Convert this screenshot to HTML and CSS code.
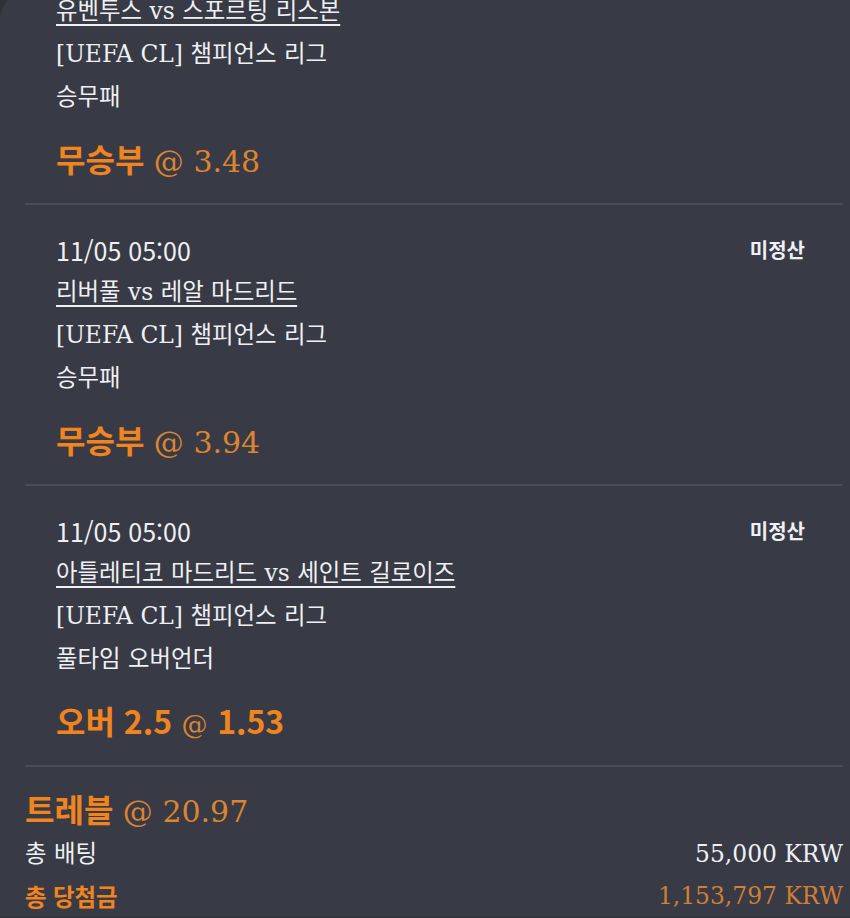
FILE: index.html
```html
<!DOCTYPE html>
<html lang="ko">

<head>
    <meta charset="UTF-8">
    <meta name="viewport" content="width=device-width, initial-scale=1.0">
    <title>배팅 내역</title>
    <link rel="stylesheet" href="styles.css">
</head>

<body>
    <div class="sheet-edge"></div>
    <div class="sheet">
        <div class="bet bet-cut">
            <a class="match" href="#">유벤투스 vs 스포르팅 리스본</a>
            <div class="line">[UEFA CL] 챔피언스 리그</div>
            <div class="line">승무패</div>
            <div class="pick"><b>무승부</b> @ 3.48</div>
        </div>

        <div class="bet">
            <div class="head">
                <span class="date">11/05 05:00</span>
                <span class="status">미정산</span>
            </div>
            <a class="match" href="#">리버풀 vs 레알 마드리드</a>
            <div class="line">[UEFA CL] 챔피언스 리그</div>
            <div class="line">승무패</div>
            <div class="pick"><b>무승부</b> @ 3.94</div>
        </div>

        <div class="bet">
            <div class="head">
                <span class="date">11/05 05:00</span>
                <span class="status">미정산</span>
            </div>
            <a class="match" href="#">아틀레티코 마드리드 vs 세인트 길로이즈</a>
            <div class="line">[UEFA CL] 챔피언스 리그</div>
            <div class="line">풀타임 오버언더</div>
            <div class="pick"><b>오버 2.5</b> <span class="at">@</span> <b>1.53</b></div>
        </div>

        <div class="summary">
            <div class="pick"><b>트레블</b> @ 20.97</div>
            <div class="row">
                <span>총 배팅</span>
                <span>55,000 KRW</span>
            </div>
            <div class="row row-win">
                <b>총 당첨금</b>
                <span>1,153,797 KRW</span>
            </div>
        </div>
    </div>
</body>

</html>
```

FILE: styles.css
```css
body {
    margin: 0;
    background: #2f3038;
    color: #eef0f3;
    font-family: "DejaVu Serif", "Noto Sans CJK KR", serif;
    font-size: 23.4px;
    overflow: hidden;
}

.sheet-edge {
    height: 3px;
    margin-left: 30px;
    background: #5c5e68;
}

.sheet {
    background: #383a45;
    border-top-left-radius: 30px;
    padding: 0 7px 0 25px;
    min-height: 915px;
}

.bet {
    padding: 23px 38px 20px 31px;
    border-bottom: 2px solid #4a4c58;
}

.bet-cut {
    padding-top: 0;
    margin-top: -13px;
}

.head {
    display: flex;
    justify-content: space-between;
    align-items: center;
    height: 43px;
}

.date {
    font-family: "Noto Sans CJK KR", sans-serif;
    font-size: 25px;
    font-weight: 400;
}

.status {
    font-family: "Noto Sans CJK KR", sans-serif;
    font-size: 20px;
    font-weight: 700;
}

.match {
    display: block;
    width: fit-content;
    height: 43px;
    line-height: 43px;
    color: #eef0f3;
    text-decoration: underline;
    text-decoration-thickness: 2px;
    text-underline-offset: 5px;
}

.line {
    height: 43px;
    line-height: 43px;
}

.pick {
    margin-top: 14px;
    height: 50px;
    line-height: 50px;
    font-size: 30px;
    color: #dc8530;
}

.pick b {
    font-family: "Noto Sans CJK KR", sans-serif;
    font-size: 32px;
    font-weight: 700;
    color: #f0841f;
}

.pick .at {
    font-size: 26px;
}

.summary {
    padding-top: 16px;
}

.summary .pick {
    margin-top: 0;
}

.row {
    display: flex;
    justify-content: space-between;
    height: 42px;
    line-height: 42px;
}

.row-win {
    color: #d07f35;
}

.row-win b {
    font-family: "Noto Sans CJK KR", sans-serif;
    color: #f0841f;
}
```
